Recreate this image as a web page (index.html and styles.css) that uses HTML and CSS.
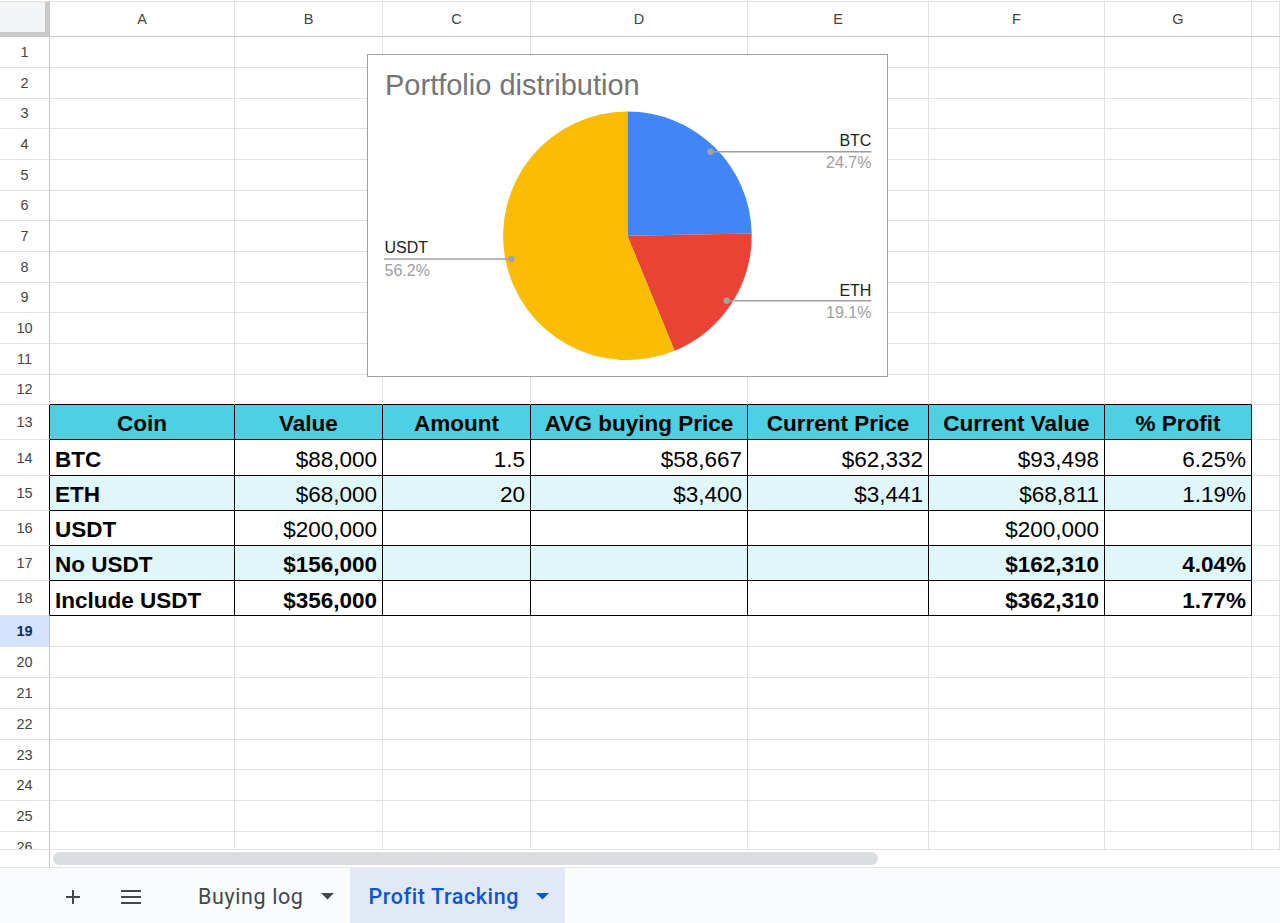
FILE: index.html
```html
<!DOCTYPE html>
<html>
<head>
<meta charset="utf-8">
<link rel="stylesheet" href="styles.css">
</head>
<body>
<div class="sheet">
  <div class="grid">
    <div class="colhdr">
      <div class="corner"></div><div>A</div><div>B</div><div>C</div><div>D</div><div>E</div><div>F</div><div>G</div><div></div>
    </div>
    <div class="row"><div class="rh">1</div><div class="c"></div><div class="c"></div><div class="c"></div><div class="c"></div><div class="c"></div><div class="c"></div><div class="c"></div><div class="c"></div></div>
    <div class="row"><div class="rh">2</div><div class="c"></div><div class="c"></div><div class="c"></div><div class="c"></div><div class="c"></div><div class="c"></div><div class="c"></div><div class="c"></div></div>
    <div class="row"><div class="rh">3</div><div class="c"></div><div class="c"></div><div class="c"></div><div class="c"></div><div class="c"></div><div class="c"></div><div class="c"></div><div class="c"></div></div>
    <div class="row"><div class="rh">4</div><div class="c"></div><div class="c"></div><div class="c"></div><div class="c"></div><div class="c"></div><div class="c"></div><div class="c"></div><div class="c"></div></div>
    <div class="row"><div class="rh">5</div><div class="c"></div><div class="c"></div><div class="c"></div><div class="c"></div><div class="c"></div><div class="c"></div><div class="c"></div><div class="c"></div></div>
    <div class="row"><div class="rh">6</div><div class="c"></div><div class="c"></div><div class="c"></div><div class="c"></div><div class="c"></div><div class="c"></div><div class="c"></div><div class="c"></div></div>
    <div class="row"><div class="rh">7</div><div class="c"></div><div class="c"></div><div class="c"></div><div class="c"></div><div class="c"></div><div class="c"></div><div class="c"></div><div class="c"></div></div>
    <div class="row"><div class="rh">8</div><div class="c"></div><div class="c"></div><div class="c"></div><div class="c"></div><div class="c"></div><div class="c"></div><div class="c"></div><div class="c"></div></div>
    <div class="row"><div class="rh">9</div><div class="c"></div><div class="c"></div><div class="c"></div><div class="c"></div><div class="c"></div><div class="c"></div><div class="c"></div><div class="c"></div></div>
    <div class="row"><div class="rh">10</div><div class="c"></div><div class="c"></div><div class="c"></div><div class="c"></div><div class="c"></div><div class="c"></div><div class="c"></div><div class="c"></div></div>
    <div class="row"><div class="rh">11</div><div class="c"></div><div class="c"></div><div class="c"></div><div class="c"></div><div class="c"></div><div class="c"></div><div class="c"></div><div class="c"></div></div>
    <div class="row pre"><div class="rh">12</div><div class="c"></div><div class="c"></div><div class="c"></div><div class="c"></div><div class="c"></div><div class="c"></div><div class="c"></div><div class="c"></div></div>

    <div class="row t hd"><div class="rh">13</div><div class="c">Coin</div><div class="c">Value</div><div class="c">Amount</div><div class="c">AVG buying Price</div><div class="c">Current Price</div><div class="c">Current Value</div><div class="c">% Profit</div><div class="c"></div></div>
    <div class="row t"><div class="rh">14</div><div class="c b">BTC</div><div class="c n">$88,000</div><div class="c n">1.5</div><div class="c n">$58,667</div><div class="c n">$62,332</div><div class="c n">$93,498</div><div class="c n">6.25%</div><div class="c"></div></div>
    <div class="row t alt"><div class="rh">15</div><div class="c b">ETH</div><div class="c n">$68,000</div><div class="c n">20</div><div class="c n">$3,400</div><div class="c n">$3,441</div><div class="c n">$68,811</div><div class="c n">1.19%</div><div class="c"></div></div>
    <div class="row t"><div class="rh">16</div><div class="c b">USDT</div><div class="c n">$200,000</div><div class="c n"></div><div class="c n"></div><div class="c n"></div><div class="c n">$200,000</div><div class="c n"></div><div class="c"></div></div>
    <div class="row t alt"><div class="rh">17</div><div class="c b">No USDT</div><div class="c n b">$156,000</div><div class="c n"></div><div class="c n"></div><div class="c n"></div><div class="c n b">$162,310</div><div class="c n b">4.04%</div><div class="c"></div></div>
    <div class="row t"><div class="rh">18</div><div class="c b">Include USDT</div><div class="c n b">$356,000</div><div class="c n"></div><div class="c n"></div><div class="c n"></div><div class="c n b">$362,310</div><div class="c n b">1.77%</div><div class="c"></div></div>

    <div class="row lo sel"><div class="rh">19</div><div class="c"></div><div class="c"></div><div class="c"></div><div class="c"></div><div class="c"></div><div class="c"></div><div class="c"></div><div class="c"></div></div>
    <div class="row lo"><div class="rh">20</div><div class="c"></div><div class="c"></div><div class="c"></div><div class="c"></div><div class="c"></div><div class="c"></div><div class="c"></div><div class="c"></div></div>
    <div class="row lo"><div class="rh">21</div><div class="c"></div><div class="c"></div><div class="c"></div><div class="c"></div><div class="c"></div><div class="c"></div><div class="c"></div><div class="c"></div></div>
    <div class="row lo"><div class="rh">22</div><div class="c"></div><div class="c"></div><div class="c"></div><div class="c"></div><div class="c"></div><div class="c"></div><div class="c"></div><div class="c"></div></div>
    <div class="row lo"><div class="rh">23</div><div class="c"></div><div class="c"></div><div class="c"></div><div class="c"></div><div class="c"></div><div class="c"></div><div class="c"></div><div class="c"></div></div>
    <div class="row lo"><div class="rh">24</div><div class="c"></div><div class="c"></div><div class="c"></div><div class="c"></div><div class="c"></div><div class="c"></div><div class="c"></div><div class="c"></div></div>
    <div class="row lo"><div class="rh">25</div><div class="c"></div><div class="c"></div><div class="c"></div><div class="c"></div><div class="c"></div><div class="c"></div><div class="c"></div><div class="c"></div></div>
    <div class="row lo"><div class="rh">26</div><div class="c"></div><div class="c"></div><div class="c"></div><div class="c"></div><div class="c"></div><div class="c"></div><div class="c"></div><div class="c"></div></div>

    <div class="chart">
      <svg width="521" height="323" viewBox="0 0 521 323">
        <text class="ttl" x="18" y="41">Portfolio distribution</text>
        <path d="M260.4,181.8 L260.4,57.5 A124.3,124.3 0 0 1 384.68,179.46 Z" fill="#4285f4"/>
        <path d="M260.4,181.8 L384.68,179.46 A124.3,124.3 0 0 1 307.61,296.79 Z" fill="#ea4335"/>
        <path d="M260.4,181.8 L307.61,296.79 A124.3,124.3 0 1 1 260.4,57.5 Z" fill="#fbbc04"/>
        <g class="lead">
          <line x1="343.5" y1="97.7" x2="504.4" y2="97.7"/>
          <line x1="359.7" y1="246.7" x2="504.4" y2="246.7"/>
          <line x1="17.1" y1="205" x2="144.5" y2="205"/>
        </g>
        <g class="dot">
          <circle cx="343.5" cy="97.7" r="3.2"/>
          <circle cx="359.7" cy="246.7" r="3.2"/>
          <circle cx="144.5" cy="205" r="3.2"/>
        </g>
        <text class="lbl" x="504.4" y="91.7" text-anchor="end">BTC</text>
        <text class="pct" x="504.4" y="113.7" text-anchor="end">24.7%</text>
        <text class="lbl" x="504.4" y="241.7" text-anchor="end">ETH</text>
        <text class="pct" x="504.4" y="263.7" text-anchor="end">19.1%</text>
        <text class="lbl" x="17.5" y="199.3">USDT</text>
        <text class="pct" x="17.5" y="221.7">56.2%</text>
      </svg>
    </div>
  </div>

  <div class="hscroll">
    <div class="hs-rh"></div>
    <div class="hs-track"><div class="hs-thumb"></div></div>
  </div>

  <div class="tabs">
    <div class="tbtn plus">
      <svg width="16" height="16" viewBox="0 0 16 16"><path d="M8 1v14M1 8h14" stroke="#444746" stroke-width="2" fill="none"/></svg>
    </div>
    <div class="tbtn menu">
      <svg width="22" height="16" viewBox="0 0 22 16"><path d="M1 2h20M1 8h20M1 14h20" stroke="#444746" stroke-width="2" fill="none"/></svg>
    </div>
    <div class="tab">
      <span class="tname">Buying log</span>
      <svg class="caret" width="13" height="7" viewBox="0 0 13 7"><path d="M0 0h13L6.5 6.5z" fill="#444746"/></svg>
    </div>
    <div class="tab active">
      <span class="tname">Profit Tracking</span>
      <svg class="caret" width="13" height="7" viewBox="0 0 13 7"><path d="M0 0h13L6.5 6.5z" fill="#0b57d0"/></svg>
    </div>
  </div>
</div>
</body>
</html>
```

FILE: styles.css
```css
* { box-sizing: border-box; }
html, body { margin: 0; padding: 0; background: #fff; }
body {
  font-family: "Liberation Sans", Arial, sans-serif;
  width: 1280px;
  height: 923px;
  overflow: hidden;
}
.sheet { display: flex; flex-direction: column; height: 923px; }
.grid { position: relative; height: 849px; overflow: hidden; flex: none; }

.colhdr, .row {
  display: grid;
  grid-template-columns: 50px 185px 148px 148px 217px 181px 176px 147px 1fr;
}
.colhdr { margin-top: 1px; height: 36.3px; border-top: 1px solid #e1e1e1; }
.colhdr > div {
  border-right: 1px solid #e1e1e1;
  border-bottom: 1px solid #c4c7c5;
  display: flex; align-items: center; justify-content: center;
  font-size: 14.5px; color: #444;
}
.colhdr > .corner {
  background: #f3f4f5;
  border-right: 5px solid #c9c9c9;
  border-bottom: 5px solid #c9c9c9;
}

.row { height: 30.67px; }
.row > div { border-right: 1px solid #e1e1e1; border-bottom: 1px solid #e1e1e1; }
.row > .rh {
  border-right-color: #c4c7c5;
  display: flex; align-items: center; justify-content: center;
  font-size: 14.5px; color: #444;
}
.row.lo { height: 30.8px; }
.row.sel > .rh { background: #d3e3fd; color: #062e6f; font-weight: bold; }
.row.pre > .c:not(:last-child) { border-bottom-color: #000; }

.row.t { height: 35.23px; }
.row.t > .c {
  border-color: #000;
  display: flex; align-items: center;
  padding: 5px 5px 0;
  font-size: 22.5px; line-height: 1; color: #000;
  white-space: nowrap;
}
.row.t > .c:last-child { border-color: #e1e1e1; }
.row.t > .rh { border-right-color: #000; }
.row.hd > .c:not(:last-child) {
  background: #4dd0e1; font-weight: bold; justify-content: center; padding-top: 4px;
}
.row.alt > .c:not(:last-child) { background: #e0f7fa; }
.c.n { justify-content: flex-end; }
.c.b { font-weight: bold; }

.chart {
  position: absolute; left: 367px; top: 54px;
  width: 521px; height: 323px;
  background: #fff; border: 1px solid #9e9e9e;
}
.chart svg { position: absolute; left: -1px; top: -1px; }
.chart text { font-family: "Liberation Sans", Arial, sans-serif; }
.chart .ttl { font-size: 29px; fill: #757575; }
.chart .lbl { font-size: 16px; fill: #222; }
.chart .pct { font-size: 16px; fill: #9e9e9e; }
.chart .lead line { stroke: #9e9e9e; stroke-width: 1.5; }
.chart .dot circle { fill: #a3a3a3; }

.hscroll { height: 18px; display: flex; border-top: 1px solid #e1e1e1; flex: none; }
.hs-rh { width: 50px; border-right: 1px solid #c4c7c5; }
.hs-track { flex: 1; padding: 2px 0 0 3px; }
.hs-thumb { width: 825px; height: 13px; border-radius: 7px; background: #dadce0; }

.tabs {
  flex: 1; display: flex; align-items: stretch;
  background: #f9fbfd; border-top: 1px solid #e3e3e3;
  font-family: Roboto, "Liberation Sans", sans-serif;
}
.tbtn { display: flex; align-items: center; justify-content: center; padding-top: 2px; }
.plus { margin-left: 65px; width: 16px; }
.menu { margin-left: 39px; width: 22px; }
.tab {
  display: flex; align-items: center;
  padding: 2px 16px 0 18px;
  font-size: 21.5px; letter-spacing: 0.6px; color: #444746;
}
.menu + .tab { margin-left: 38px; }
.tab .caret { margin-left: 17px; }
.tab.active { background: #e1e9f7; color: #0b57d0; font-weight: 500; padding-left: 19px; }
```
